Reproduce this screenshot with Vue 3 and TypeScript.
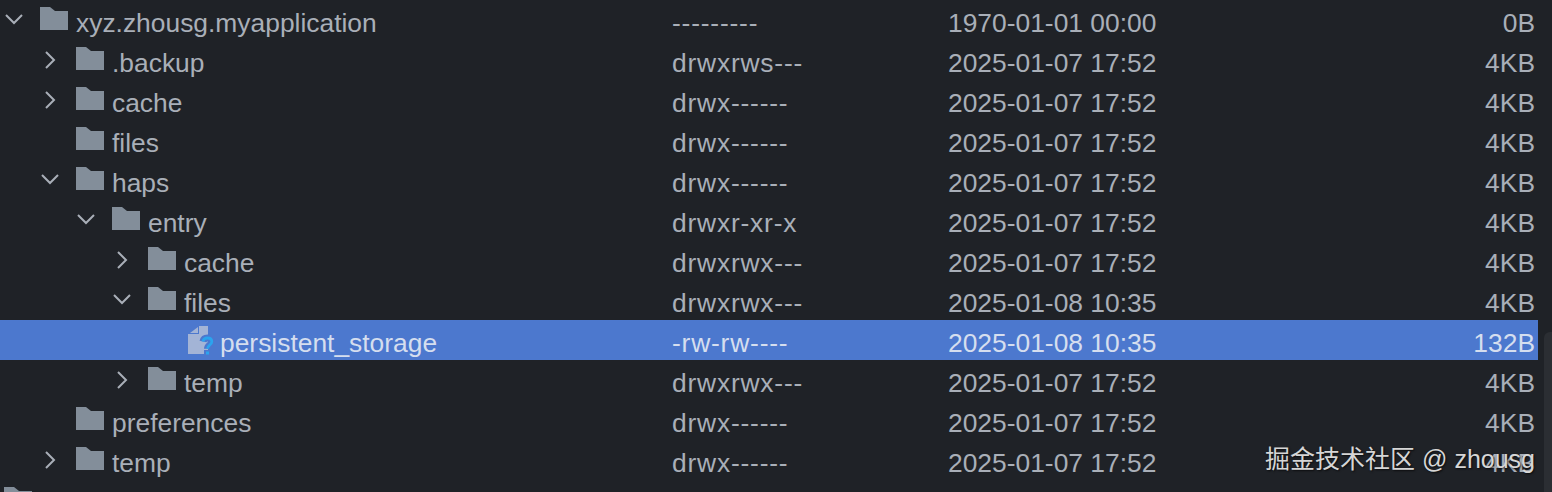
<script setup lang="ts">
interface Row {
    name: string
    depth: number
    perms: string
    date: string
    size: string
    arrow?: 'open' | 'closed'
    file?: boolean
    selected?: boolean
}

const rows: Row[] = [
    { name: 'xyz.zhousg.myapplication', depth: 0, perms: '---------', date: '1970-01-01 00:00', size: '0B', arrow: 'open' },
    { name: '.backup', depth: 1, perms: 'drwxrws---', date: '2025-01-07 17:52', size: '4KB', arrow: 'closed' },
    { name: 'cache', depth: 1, perms: 'drwx------', date: '2025-01-07 17:52', size: '4KB', arrow: 'closed' },
    { name: 'files', depth: 1, perms: 'drwx------', date: '2025-01-07 17:52', size: '4KB' },
    { name: 'haps', depth: 1, perms: 'drwx------', date: '2025-01-07 17:52', size: '4KB', arrow: 'open' },
    { name: 'entry', depth: 2, perms: 'drwxr-xr-x', date: '2025-01-07 17:52', size: '4KB', arrow: 'open' },
    { name: 'cache', depth: 3, perms: 'drwxrwx---', date: '2025-01-07 17:52', size: '4KB', arrow: 'closed' },
    { name: 'files', depth: 3, perms: 'drwxrwx---', date: '2025-01-08 10:35', size: '4KB', arrow: 'open' },
    { name: 'persistent_storage', depth: 4, perms: '-rw-rw----', date: '2025-01-08 10:35', size: '132B', file: true, selected: true },
    { name: 'temp', depth: 3, perms: 'drwxrwx---', date: '2025-01-07 17:52', size: '4KB', arrow: 'closed' },
    { name: 'preferences', depth: 1, perms: 'drwx------', date: '2025-01-07 17:52', size: '4KB' },
    { name: 'temp', depth: 1, perms: 'drwx------', date: '2025-01-07 17:52', size: '4KB', arrow: 'closed' }
]

const indent = (depth: number) => ({ paddingLeft: `${depth * 36}px` })
</script>

<template>
    <div class="panel">
        <div class="list">
            <div v-for="(row, i) in rows" :key="i" class="row" :class="{ selected: row.selected }">
                <div class="name" :style="indent(row.depth)">
                    <span class="arrow">
                        <svg v-if="row.arrow === 'open'" width="20" height="12" viewBox="0 0 20 12">
                            <path d="M2 1l8 8 8-8" fill="none" stroke="#a9afb8" stroke-width="2" />
                        </svg>
                        <svg v-else-if="row.arrow === 'closed'" width="12" height="22" viewBox="0 0 12 22">
                            <path d="M2 3l8 8-8 8" fill="none" stroke="#a9afb8" stroke-width="2" />
                        </svg>
                    </span>
                    <svg v-if="row.file" class="icon file-icon" width="28" height="30" viewBox="0 0 28 30">
                        <path d="M11 0h9v28H0V8h11z" fill="#a3b4d6" />
                        <path d="M2 7l8-6v6z" fill="#a3b4d6" />
                        <path d="M15 15.500c.5-2.500 2.300-3.500 4.500-3.500 2.600 0 4.300 1.500 4.300 3.800 0 3.200-4.300 3.200-4.300 7" fill="none" stroke="#4c78ce" stroke-width="7" />
                        <rect x="16" y="24" width="7" height="6" fill="#4c78ce" />
                        <path d="M15 15.500c.5-2.500 2.300-3.500 4.500-3.500 2.600 0 4.300 1.500 4.300 3.800 0 3.200-4.300 3.200-4.300 7" fill="none" stroke="#2ba4ee" stroke-width="2.800" />
                        <rect x="18" y="25.500" width="3" height="3" fill="#2ba4ee" />
                    </svg>
                    <svg v-else class="icon" width="28" height="23" viewBox="0 0 28 23">
                        <path d="M0 0h10l5 4h13v19H0z" fill="#838e9a" />
                    </svg>
                    <span class="label">{{ row.name }}</span>
                </div>
                <div class="perms">{{ row.perms }}</div>
                <div class="date">{{ row.date }}</div>
                <div class="size">{{ row.size }}</div>
            </div>
            <div class="row">
                <div class="name peek">
                    <svg class="icon" width="28" height="23" viewBox="0 0 28 23">
                        <path d="M0 0h10l5 4h13v19H0z" fill="#838e9a" />
                    </svg>
                </div>
            </div>
        </div>
        <div class="scrollbar"></div>
        <div class="watermark">掘金技术社区 @ zhousg</div>
    </div>
</template>

<style scoped>
.panel
{
    position: relative;
    display: flex;
    width: 1552px;
    height: 492px;
    overflow: hidden;
    background-color: #1f2227;
    color: #a9afb8;
    font-family: "Liberation Sans", Arial, sans-serif;
    font-size: 26.4px;
}

.list
{
    width: 1538px;
    flex-shrink: 0;
}

.row
{
    display: grid;
    grid-template-columns: 672px 276px 1fr 120px;
    height: 40px;
    line-height: 46px;
    white-space: nowrap;
}

.row.selected
{
    background-color: #4c78ce;
    color: #d5deef;
}

.name
{
    display: flex;
    align-items: flex-start;
}

.arrow
{
    display: flex;
    justify-content: center;
    align-items: center;
    width: 40px;
    height: 39px;
    flex-shrink: 0;
    padding-right: 13px;
    box-sizing: border-box;
}

.icon
{
    margin-top: 7px;
    margin-right: 8px;
    flex-shrink: 0;
}

.file-icon
{
    margin-top: 6px;
    margin-left: 4px;
    margin-right: 4px;
}

.peek
{
    padding-left: 4px;
}

.perms
{
    letter-spacing: 0.8px;
}

.size
{
    text-align: right;
    padding-right: 3px;
}

.scrollbar
{
    width: 8px;
    height: 160px;
    margin: 332px 0 0 6px;
    border-radius: 6px 0 0 0;
    background-color: #2b2e33;
}

.watermark
{
    position: absolute;
    right: 17px;
    top: 444px;
    color: #d6d6d6;
    font-size: 25px;
    line-height: 30px;
    font-family: "Liberation Sans", "Noto Sans CJK SC", sans-serif;
    text-shadow: 1px 1px 2px rgba(0, 0, 0, 0.7);
}
</style>

<style>
body
{
    background-color: #1f2227;
}
</style>
